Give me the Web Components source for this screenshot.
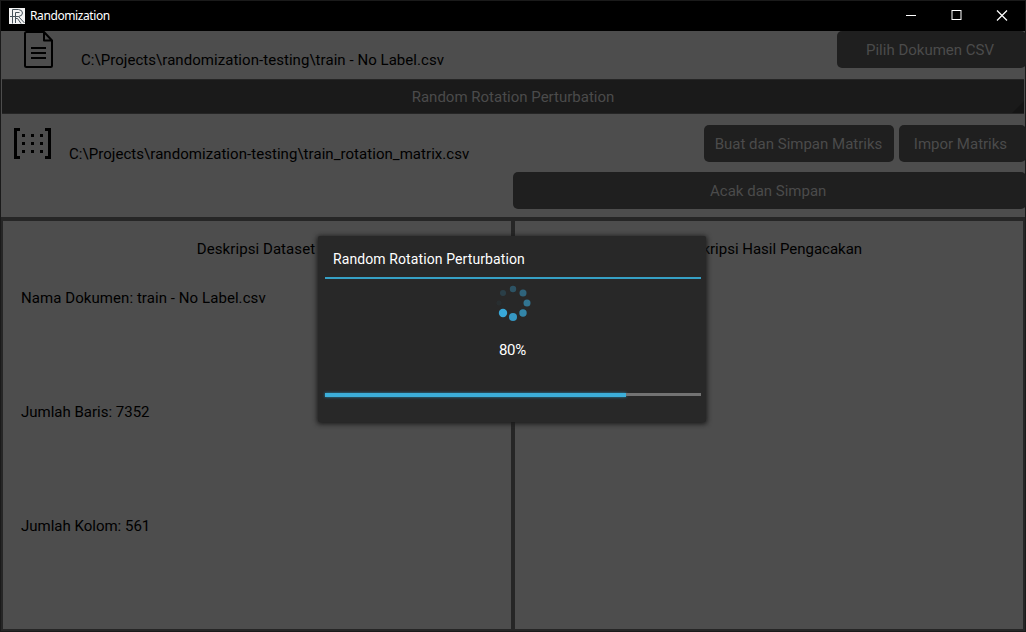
<!DOCTYPE html>
<html lang="id">
<head>
<meta charset="utf-8">
<title>Randomization</title>
<style>
html,body{margin:0;height:100%;overflow:hidden;background:#000}
</style>
</head>
<body>
<app-window></app-window>
<script>
const define = (name, html) => customElements.define(name, class extends HTMLElement {
  constructor() {
    super();
    this.attachShadow({ mode: 'open' }).innerHTML = html;
  }
});

define('title-bar', `
<style>
:host{display:flex;align-items:center;height:30px;background:#000;color:#fff;font:12px/16px "Noto Sans",sans-serif;letter-spacing:-.4px}
.logo{width:16px;height:16px;margin:0 5px 0 8px}
span{flex:1}
.ctl{width:45.5px;height:30px}
.max{margin:0 -.5px 0 .5px}
.close{margin-right:1px}
</style>
<svg class="logo" viewBox="0 0 16 16"><rect width="16" height="16" fill="#f4f4f4"/><g fill="none" stroke="#46525a"><path d="M3.500 15.500V1.500H9.500Q13.500 2 13.500 5T9.500 8.500H1M9.500 8.500L15.500 15M6.500 15V4.500H10.500M6.500 10.500H8.500L12 15.500"/></g></svg>
<span><slot></slot></span>
<svg class="ctl" viewBox="0 0 45.5 30"><path d="M18 14.500H28" stroke="#fff"/></svg>
<svg class="ctl max" viewBox="0 0 45.5 30"><rect x="18" y="9.500" width="9" height="9" fill="none" stroke="#fff"/></svg>
<svg class="ctl close" viewBox="0 0 45.5 30"><path d="M18 9.500L28 19.500M28 9.500L18 19.500" stroke="#fff" stroke-width="1.200"/></svg>
`);

define('round-button', `
<style>
:host{display:flex;align-items:center;justify-content:center;box-sizing:border-box;height:37px;padding-right:2px;background:#1f1f1f;border-radius:5px;color:#4b4b4b;white-space:nowrap}
</style><slot></slot>`);

define('spinner-bar', `
<style>
:host{display:flex;align-items:center;justify-content:center;box-sizing:border-box;height:35px;margin:0 1px;background:#1a1a1a;border:solid #252525;border-width:1px 0;color:#4b4b4b;position:relative}
svg{position:absolute;right:0;bottom:0}
</style><slot></slot><svg width="12" height="12"><path d="M12 0V12H0Z" fill="#141414"/></svg>`);

define('document-icon', `
<style>:host{display:block;width:30px;height:38px}svg{display:block}</style>
<svg width="30" height="38" fill="none" stroke="#000" stroke-width="2" stroke-linejoin="round"><path d="M20 1H2.500Q1 1 1 2.500V34.500Q1 36 2.500 36H26.500Q28 36 28 34.500V9.500L20 1V9.500H28"/><path d="M7 17H22M7 22H22M7 27H22"/></svg>`);

define('matrix-icon', `
<style>:host{display:block;width:38px;height:31px}svg{display:block}</style>
<svg width="38" height="31"><path d="M6 1.500H1.500V29.500H6M31 1.500H35.500V29.500H31" fill="none" stroke="#000" stroke-width="3"/><path d="M8 6h3v3h-3zM17 6h3v3h-3zM26 6h3v3h-3zM8 14h3v3h-3zM17 14h3v3h-3zM26 14h3v3h-3zM8 22h3v3h-3zM17 22h3v3h-3zM26 22h3v3h-3z"/></svg>`);

define('data-pane', `
<style>
:host{display:flex;flex-direction:column;box-sizing:border-box;min-width:0;padding:18px 18px 0}
h2{margin:0;font:inherit;text-align:center}
.rows{display:flex;flex-direction:column;gap:94px;margin-top:29px}
</style><h2><slot name="heading"></slot></h2><div class="rows"><slot></slot></div>`);

define('loading-dots', `
<style>:host{display:block;width:36px;height:36px}</style>
<svg width="36" height="36" viewBox="-18 -18 36 36" fill="#38a8d9"><circle cx="-14" r="2.500" opacity=".05"/><circle cx="-10" cy="-10" r="3" opacity=".18"/><circle cy="-14" r="3.200" opacity=".34"/><circle cx="10" cy="-10" r="3.500" opacity=".48"/><circle cx="14" r="3.500" opacity=".6"/><circle cx="10" cy="10" r="3.700" opacity=".73"/><circle cy="14" r="4" opacity=".87"/><circle cx="-10" cy="10" r="4.200"/></svg>`);

define('progress-line', `
<style>
:host{display:flex;align-items:center;height:7px}
.done{width:301px;height:4px;background:#3cafda;box-shadow:0 0 3px #268bb3}
.rest{flex:1;height:3px;background:#737373}
</style><div class="done"></div><div class="rest"></div>`);

define('progress-popup', `
<style>
:host{display:flex;flex-direction:column;box-sizing:border-box;width:388px;height:186px;padding:0 5px 0 7px;background:#282828;box-shadow:0 1px 5px 1px #1a1a1a;border-radius:2px;color:#fff}
header{box-sizing:border-box;height:43px;padding:13px 0 0 8px;border-bottom:2px solid #36a0c5;font-size:14px;line-height:20px;letter-spacing:.1px}
loading-dots{margin:6px auto 0}
p{margin:19px 1px 0 0;text-align:center;line-height:20px;height:20px;letter-spacing:-.2px}
progress-line{margin-top:31px}
</style>
<header><slot name="title"></slot></header>
<loading-dots></loading-dots>
<p><slot></slot></p>
<progress-line></progress-line>`);

define('app-window', `
<style>
:host{display:flex;flex-direction:column;box-sizing:border-box;position:relative;width:1026px;height:632px;border:1px solid #1a1a1a;background:#4d4d4d;color:#000;font:15px/20px Roboto,sans-serif}
.file{display:flex;height:48px}
.file document-icon{margin-left:23px}
.path{letter-spacing:.05px}
.file .path{flex:1;margin:19px 0 0 27px}
.file round-button{width:189px;padding-right:3px;margin-right:-1px}
.matrix{display:flex;height:58px}
.matrix matrix-icon{margin:14px 0 0 13px}
.matrix .path{flex:1;margin:30px 0 0 17px}
.matrix round-button{margin:11px -1px 0 5px;width:127px;padding-right:4px}
.matrix round-button.make{width:190px;margin-right:0;padding-right:1px}
.action{display:flex;justify-content:flex-end;height:45px;margin-right:-1px}
.action round-button{width:513.5px}
.panes{flex:1;display:grid;grid-template-columns:508px 508px;column-gap:4px;border:solid #262626;border-width:4px 2px 2px;background:#262626}
data-pane{background:#4d4d4d}
.name,.left{letter-spacing:.07px}
.left{margin-right:2px}
.right{margin-left:1px}
progress-popup{position:absolute;left:317px;top:235px}
</style>
<title-bar>Randomization</title-bar>
<div class="file"><document-icon></document-icon><div class="path">C:\\Projects\\randomization-testing\\train - No Label.csv</div><round-button>Pilih Dokumen CSV</round-button></div>
<spinner-bar>Random Rotation Perturbation</spinner-bar>
<div class="matrix"><matrix-icon></matrix-icon><div class="path">C:\\Projects\\randomization-testing\\train_rotation_matrix.csv</div><round-button class="make">Buat dan Simpan Matriks</round-button><round-button>Impor Matriks</round-button></div>
<div class="action"><round-button>Acak dan Simpan</round-button></div>
<div class="panes">
<data-pane><span slot="heading" class="left">Deskripsi Dataset</span><div class="name">Nama Dokumen: train - No Label.csv</div><div>Jumlah Baris: 7352</div><div>Jumlah Kolom: 561</div></data-pane>
<data-pane><span slot="heading" class="right">Deskripsi Hasil Pengacakan</span></data-pane>
</div>
<progress-popup><span slot="title">Random Rotation Perturbation</span>80%</progress-popup>
`);
</script>
</body>
</html>
